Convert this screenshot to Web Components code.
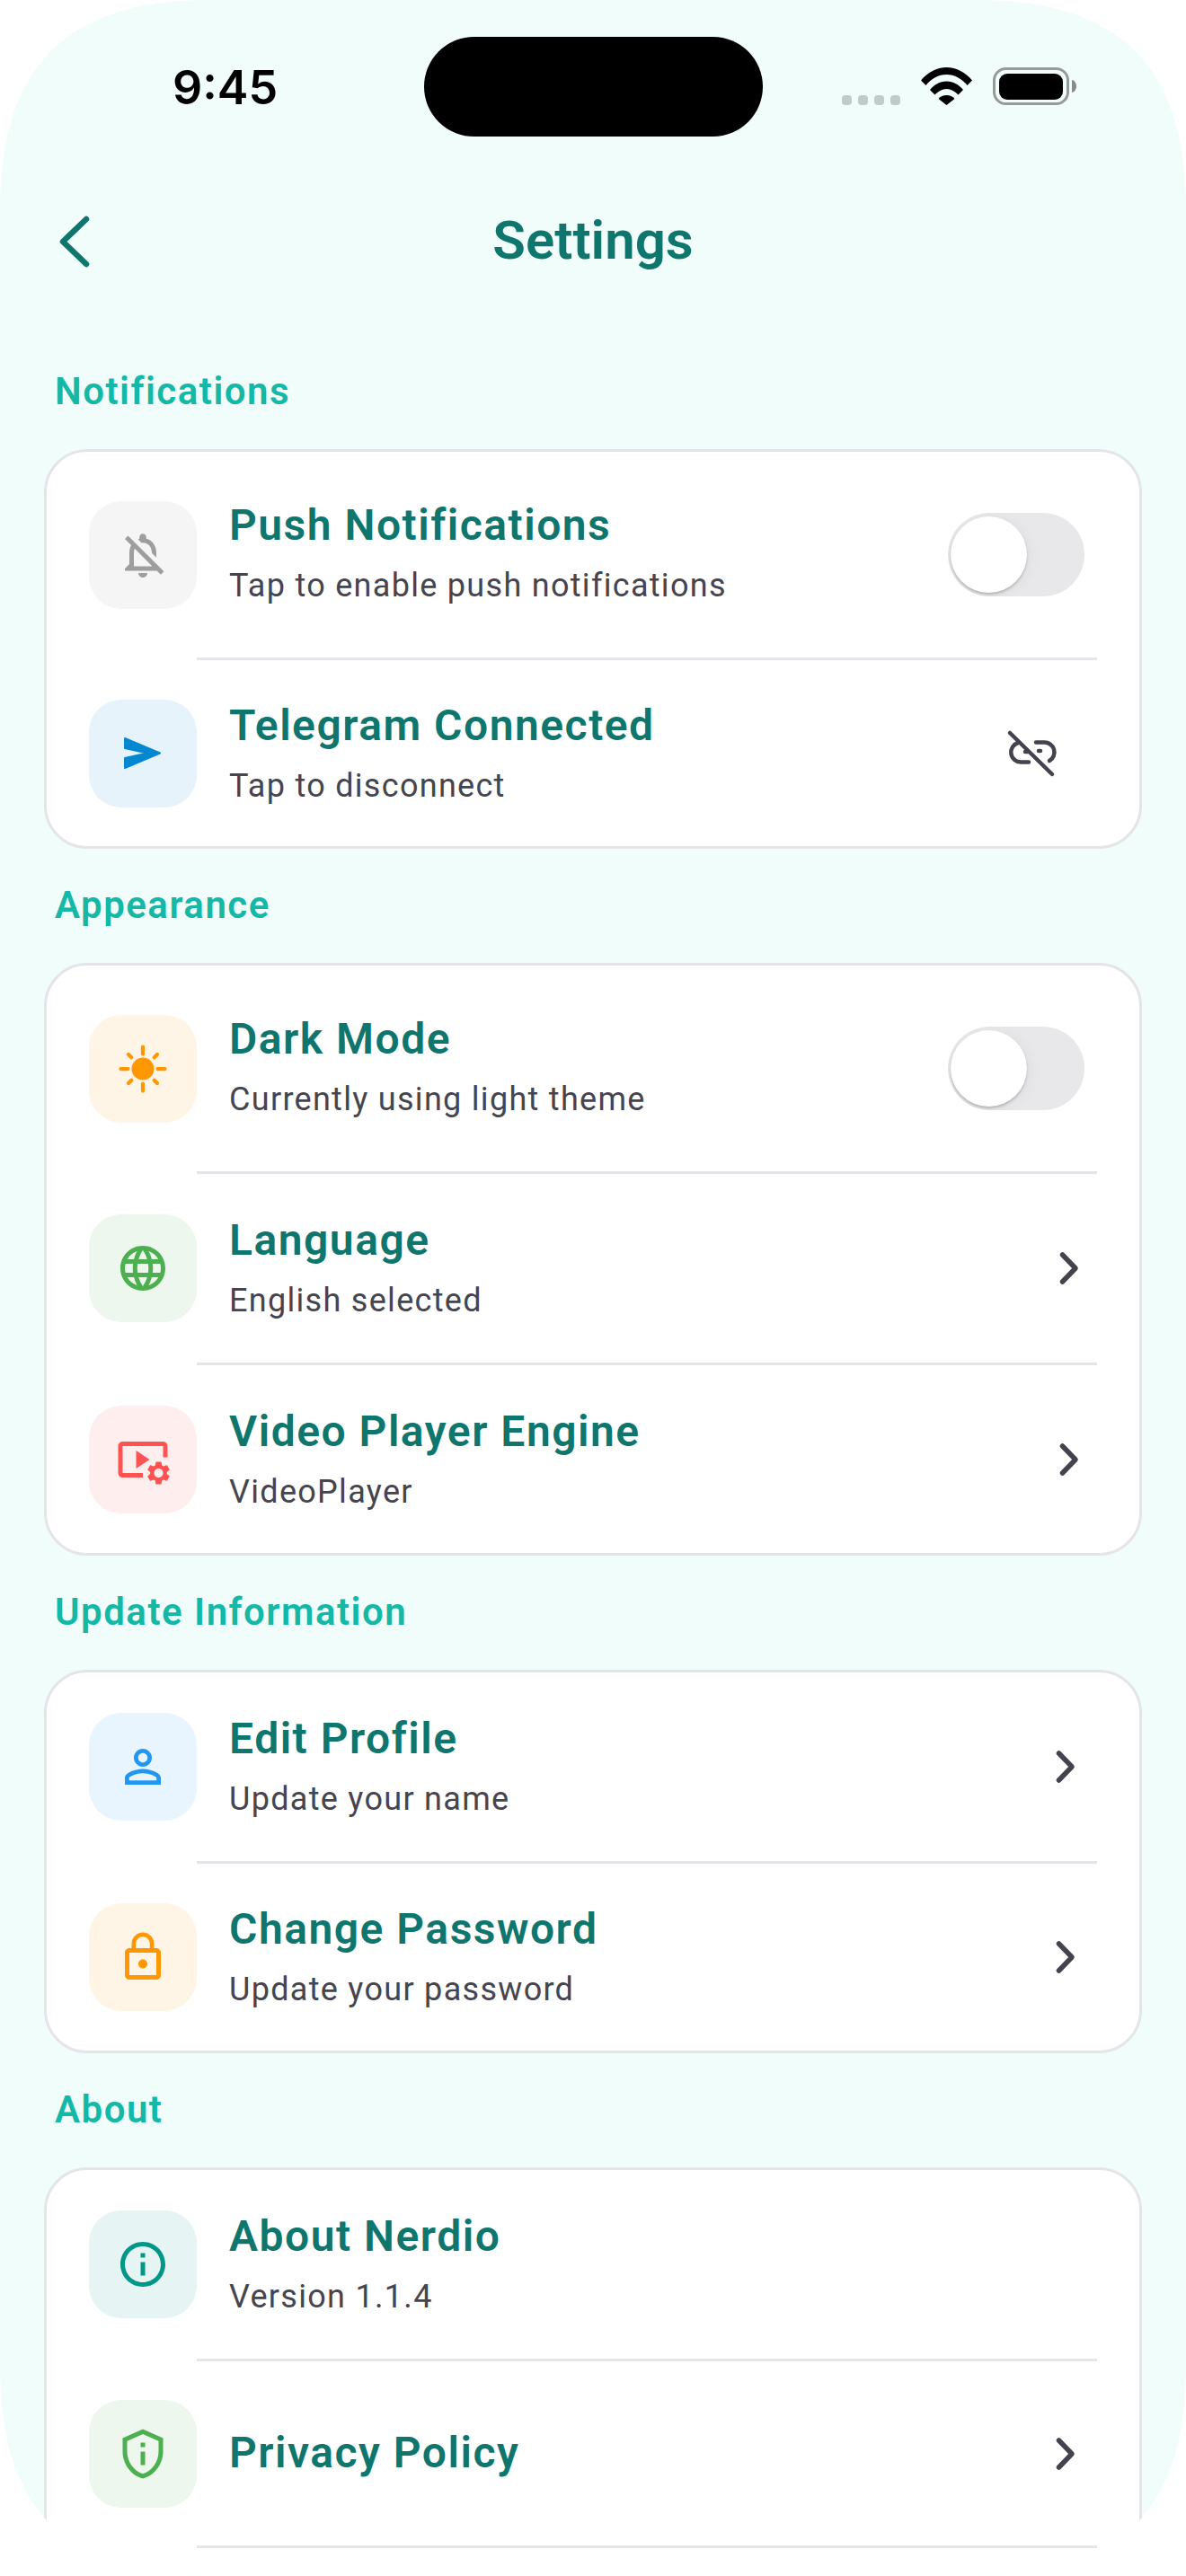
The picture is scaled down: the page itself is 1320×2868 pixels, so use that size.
<!DOCTYPE html>
<html>
<head>
<meta charset="utf-8">
<title>Settings</title>
<style>
	html, body { margin: 0; padding: 0; background: #fff; }
	body { font-family: Roboto, "Liberation Sans", sans-serif; }
</style>
</head>
<body>
<phone-screen>
	<status-bar></status-bar>
	<settings-header>Settings</settings-header>

	<settings-section heading="Notifications">
		<settings-row title="Push Notifications" sub="Tap to enable push notifications" icon="bell" tint="#9e9e9e" bg="#f5f5f5" size="229">
			<toggle-switch slot="end"></toggle-switch>
		</settings-row>
		<settings-row title="Telegram Connected" sub="Tap to disconnect" icon="send" tint="#0288d1" bg="#e6f3fa" size="207">
			<row-glyph slot="end" name="unlink"></row-glyph>
		</settings-row>
	</settings-section>

	<settings-section heading="Appearance">
		<settings-row title="Dark Mode" sub="Currently using light theme" icon="sun" tint="#ff9800" bg="#fff5e6" size="229">
			<toggle-switch slot="end"></toggle-switch>
		</settings-row>
		<settings-row title="Language" sub="English selected" icon="globe" tint="#4caf50" bg="#edf7ee" size="210">
			<row-glyph slot="end" name="chevron" wide></row-glyph>
		</settings-row>
		<settings-row title="Video Player Engine" sub="VideoPlayer" icon="video" tint="#ff5252" bg="#ffeeee" size="209">
			<row-glyph slot="end" name="chevron" wide></row-glyph>
		</settings-row>
	</settings-section>

	<settings-section heading="Update Information">
		<settings-row title="Edit Profile" sub="Update your name" icon="person" tint="#2196f3" bg="#e9f5fe" size="210">
			<row-glyph slot="end" name="chevron"></row-glyph>
		</settings-row>
		<settings-row title="Change Password" sub="Update your password" icon="lock" tint="#ff9800" bg="#fff5e6" size="208">
			<row-glyph slot="end" name="chevron"></row-glyph>
		</settings-row>
	</settings-section>

	<settings-section heading="About">
		<settings-row title="About Nerdio" sub="Version 1.1.4" icon="info" tint="#009688" bg="#e6f4f3" size="210"></settings-row>
		<settings-row title="Privacy Policy" icon="shield" tint="#4caf50" bg="#edf7ee" size="205">
			<row-glyph slot="end" name="chevron"></row-glyph>
		</settings-row>
		<settings-row size="120"></settings-row>
	</settings-section>
</phone-screen>

<script>
const ICONS = {
	bell: `<path d="M12 22c1.1 0 2-.9 2-2h-4c0 1.1.9 2 2 2zm0-15.5c2.49 0 4 2.02 4 4.5v.1l2 2V11c0-3.07-1.63-5.64-4.5-6.32V4c0-.83-.67-1.5-1.5-1.5s-1.5.67-1.5 1.5v.68c-.24.06-.47.15-.69.23l1.64 1.64c.18-.02.36-.05.55-.05zM5.41 3.35L4 4.76l2.81 2.81C6.29 8.57 6 9.74 6 11v5l-2 2v1h14.24l1.74 1.74 1.41-1.41L5.41 3.35zM16 17H8v-6c0-.68.12-1.32.34-1.9L16 16.76V17z"/>`,
	send: `<path transform="scale(.4)" stroke="currentColor" stroke-width="2" stroke-linejoin="round" d="M10 13 L49 29.5 L10 46 V35 L35 29.5 L10 24 Z"/>`,
	sun: `<circle cx="12" cy="12" r="5"/><g stroke="currentColor" stroke-width="1.7" stroke-linecap="round"><path d="M12 2.2v3.2M12 18.6v3.2M2.2 12h3.2M18.6 12h3.2M5.6 5.6l1.3 1.3M17.1 17.1l1.3 1.3M5.6 18.4l1.3-1.3M17.1 6.9l1.3-1.3"/></g>`,
	globe: `<path d="M11.99 2C6.47 2 2 6.48 2 12s4.47 10 9.99 10C17.52 22 22 17.52 22 12S17.52 2 11.99 2zm6.93 6h-2.95c-.32-1.25-.78-2.45-1.38-3.56 1.84.63 3.37 1.91 4.33 3.56zM12 4.04c.83 1.2 1.48 2.53 1.91 3.96h-3.82c.43-1.43 1.08-2.76 1.91-3.96zM4.26 14C4.1 13.36 4 12.69 4 12s.1-1.36.26-2h3.38c-.08.66-.14 1.32-.14 2 0 .68.06 1.34.14 2H4.26zm.82 2h2.95c.32 1.25.78 2.45 1.38 3.56-1.84-.63-3.37-1.9-4.33-3.56zm2.95-8H5.08c.96-1.66 2.49-2.93 4.33-3.56C8.81 5.55 8.35 6.75 8.03 8zM12 19.96c-.83-1.2-1.48-2.53-1.91-3.96h3.82c-.43 1.43-1.08 2.76-1.91 3.96zM14.34 14H9.66c-.09-.66-.16-1.32-.16-2 0-.68.07-1.35.16-2h4.68c.09.65.16 1.32.16 2 0 .68-.07 1.34-.16 2zm.25 5.56c.6-1.11 1.06-2.31 1.38-3.56h2.95c-.96 1.65-2.49 2.93-4.33 3.56zM16.36 14c.08-.66.14-1.32.14-2 0-.68-.06-1.34-.14-2h3.38c.16.64.26 1.31.26 2s-.1 1.36-.26 2h-3.38z"/>`,
	video: `<path d="M3 6h18v5h2V6c0-1.1-.9-2-2-2H3c-1.1 0-2 .9-2 2v12c0 1.1.9 2 2 2h9v-2H3V6z"/><path d="M15 12l-6-4v8l6-4z"/><path d="M22.71 18.43c.03-.29.04-.58.01-.86l1.07-.85c.1-.08.12-.21.06-.32l-1.03-1.79c-.06-.11-.19-.15-.31-.11l-1.27.5c-.23-.17-.48-.31-.75-.42l-.2-1.36c-.02-.13-.12-.22-.25-.22h-2.07c-.13 0-.23.09-.25.22l-.2 1.36c-.27.12-.52.26-.75.42l-1.28-.5c-.12-.05-.25 0-.31.11l-1.03 1.79c-.06.11-.04.24.06.32l1.07.85c-.03.29-.04.58-.01.86l-1.07.85c-.1.08-.12.21-.06.32l1.03 1.79c.06.11.19.15.31.11l1.27-.5c.23.17.48.31.75.42l.2 1.36c.02.13.12.22.25.22h2.07c.13 0 .23-.09.25-.22l.2-1.36c.27-.12.52-.26.75-.42l1.27.5c.12.05.25 0 .31-.11l1.03-1.79c.06-.11.04-.24-.06-.32l-1.06-.85zM19 20c-1.1 0-2-.9-2-2s.9-2 2-2 2 .9 2 2-.9 2-2 2z"/>`,
	person: `<path d="M12 5.9c1.16 0 2.1.94 2.1 2.1s-.94 2.1-2.1 2.1S9.9 9.16 9.9 8s.94-2.1 2.1-2.1m0 9c2.97 0 6.1 1.46 6.1 2.1v1.1H5.9V17c0-.64 3.13-2.1 6.1-2.1M12 4C9.79 4 8 5.79 8 8s1.79 4 4 4 4-1.79 4-4-1.79-4-4-4zm0 9c-2.67 0-8 1.34-8 4v3h16v-3c0-2.66-5.33-4-8-4z"/>`,
	lock: `<path d="M12 17c1.1 0 2-.9 2-2s-.9-2-2-2-2 .9-2 2 .9 2 2 2zm6-9h-1V6c0-2.76-2.24-5-5-5S7 3.24 7 6v2H6c-1.1 0-2 .9-2 2v10c0 1.1.9 2 2 2h12c1.1 0 2-.9 2-2V10c0-1.1-.9-2-2-2zM8.9 6c0-1.71 1.39-3.1 3.1-3.1s3.1 1.39 3.1 3.1v2H8.9V6zM18 20H6V10h12v10z"/>`,
	info: `<path d="M11 7h2v2h-2zm0 4h2v6h-2zm1-9C6.48 2 2 6.48 2 12s4.48 10 10 10 10-4.48 10-10S17.52 2 12 2zm0 18c-4.41 0-8-3.59-8-8s3.59-8 8-8 8 3.59 8 8-3.59 8-8 8z"/>`,
	shield: `<path d="M12 3.19l7 3.11V11c0 4.52-2.98 8.69-7 9.93-4.02-1.24-7-5.41-7-9.93V6.3l7-3.11M12 1L3 5v6c0 5.55 3.84 10.74 9 12 5.16-1.26 9-6.45 9-12V5l-9-4zm-1 6h2v2h-2zm0 4h2v6h-2z"/>`
};

class PhoneScreen extends HTMLElement {
	constructor() {
		super();
		this.attachShadow({mode: 'open'}).innerHTML = `
		<style>
		:host {
			display: block;
			width: 1320px;
			height: 2868px;
			overflow: hidden;
			background: #f0fdfb;
			/* squircle outline of the device */
			clip-path: path("M235 0H1085C1247 0 1320 73 1320 235V2633C1320 2795 1247 2868 1085 2868H235C73 2868 0 2795 0 2633V235C0 73 73 0 235 0Z");
		}
		</style>
		<slot></slot>`;
	}
}

class StatusBar extends HTMLElement {
	constructor() {
		super();
		this.attachShadow({mode: 'open'}).innerHTML = `
		<style>
		:host {
			display: flex;
			align-items: flex-start;
			height: 200px;
			box-sizing: border-box;
			padding: 41px 122px 0 192px;
		}
		.time {
			width: 280px;
			margin-top: 31px;
			font: 600 52px/52px Inter, "Liberation Sans", sans-serif;
			color: #000;
		}
		.island {
			width: 377px;
			height: 111px;
			border-radius: 56px;
			background: #000;
		}
		.right {
			display: flex;
			align-items: flex-end;
			height: 76px;
			margin-left: 88px;
		}
		.dots {
			display: flex;
			gap: 7px;
			margin-right: 23px;
		}
		.dots i {
			width: 11px;
			height: 11px;
			border-radius: 4px;
			background: #c3caca;
		}
		.wifi { display: block; margin-right: 23px; }
		.battery { display: block; }
		</style>
		<div class="time">9:45</div>
		<div class="island"></div>
		<div class="right">
			<div class="dots"><i></i><i></i><i></i><i></i></div>
			<svg class="wifi" width="57" height="42" viewBox="0 0 57 42">
				<path d="M0 14.5C7.5 5.5 17.5 0 28.5 0S49.500 5.500 57 14.500L51.500 20C45.500 12.500 37.500 8 28.500 8S11.500 12.500 5.500 20Z"/>
				<path d="M10 25C14.500 19.500 21 15.500 28.500 15.500S42.500 19.500 47 25L41.500 30.500C38 27 33.500 24 28.500 24S19 27 15.500 30.500Z"/>
				<path d="M19.500 35C21.500 32.500 25 31 28.500 31S35.500 32.500 37.500 35L28.500 42Z"/>
			</svg>
			<svg class="battery" width="93" height="42" viewBox="0 0 93 42">
				<rect x="1.500" y="1.500" width="82" height="39" rx="13" fill="none" stroke="#999" stroke-width="3"/>
				<rect x="7" y="7" width="71" height="29" rx="9"/>
				<path d="M88 14c3 .5 5 3.500 5 7s-2 6.500-5 7z" fill="#8a8a8a"/>
			</svg>
		</div>`;
	}
}

class SettingsHeader extends HTMLElement {
	constructor() {
		super();
		this.attachShadow({mode: 'open'}).innerHTML = `
		<style>
		:host {
			display: flex;
			align-items: center;
			justify-content: center;
			position: relative;
			height: 173px;
			box-sizing: border-box;
			padding-bottom: 38px;
			font: 600 60px/70px Roboto, sans-serif;
			color: #0f766e;
		}
		svg {
			position: absolute;
			left: 60px;
			top: 36px;
		}
		</style>
		<svg width="46" height="64" viewBox="0 0 46 64" fill="none" stroke="#0f766e" stroke-width="6.500" stroke-linecap="round" stroke-linejoin="round"><path d="M36 8 L10 33 L36 58"/></svg>
		<slot></slot>`;
	}
}

class SettingsSection extends HTMLElement {
	constructor() {
		super();
		this.attachShadow({mode: 'open'}).innerHTML = `
		<style>
		:host { display: block; }
		h2 {
			margin: 0;
			height: 127px;
			box-sizing: border-box;
			padding: 42px 0 0 61px;
			font: 600 42px/42px Roboto, sans-serif;
			letter-spacing: 1.500px;
			color: #14b8a6;
		}
		.card {
			margin: 0 49px;
			box-sizing: border-box;
			background: #fff;
			border: 3px solid #e5e5e9;
			border-radius: 48px;
		}
		::slotted(settings-row:not(:first-child)) {
			border-top: 3px solid transparent;
		}
		</style>
		<h2></h2>
		<div class="card"><slot></slot></div>`;
	}
	connectedCallback() {
		this.shadowRoot.querySelector('h2').textContent = this.getAttribute('heading');
	}
}

class SettingsRow extends HTMLElement {
	constructor() {
		super();
		this.attachShadow({mode: 'open'}).innerHTML = `
		<style>
		:host {
			display: block;
			position: relative;
		}
		:host(:not(:first-child))::before {
			content: "";
			position: absolute;
			left: 167px;
			right: 47px;
			top: -3px;
			height: 3px;
			background: #e5e5e9;
		}
		.row {
			display: flex;
			align-items: center;
			gap: 36px;
			padding: 0 47px;
			box-sizing: border-box;
		}
		.box {
			flex: none;
			display: flex;
			align-items: center;
			justify-content: center;
			width: 120px;
			height: 120px;
			border-radius: 36px;
		}
		.box svg { display: block; fill: currentColor; }
		.text { flex: 1; min-width: 0; padding-bottom: 2px; }
		:host([size="229"]) .text { padding-bottom: 6px; }
		.title {
			font: 600 48px/56px Roboto, sans-serif;
			letter-spacing: 1.500px;
			color: #0f766e;
		}
		.sub {
			margin-top: 18px;
			font: 400 36px/42px Roboto, sans-serif;
			letter-spacing: 1.300px;
			color: #45444f;
		}
		</style>
		<div class="row">
			<div class="box"><svg width="60" height="60" viewBox="0 0 24 24"></svg></div>
			<div class="text">
				<div class="title"></div>
				<div class="sub"></div>
			</div>
			<slot name="end"></slot>
		</div>`;
	}
	connectedCallback() {
		const root = this.shadowRoot;
		root.querySelector('.row').style.height = this.getAttribute('size') + 'px';
		const box = root.querySelector('.box');
		const icon = this.getAttribute('icon');
		if (icon) {
			box.style.background = this.getAttribute('bg');
			box.style.color = this.getAttribute('tint');
			box.querySelector('svg').innerHTML = ICONS[icon];
		} else {
			box.style.visibility = 'hidden';
		}
		root.querySelector('.title').textContent = this.getAttribute('title');
		const sub = root.querySelector('.sub');
		if (this.getAttribute('sub')) {
			sub.textContent = this.getAttribute('sub');
		} else {
			sub.remove();
		}
	}
}

class ToggleSwitch extends HTMLElement {
	constructor() {
		super();
		this.attachShadow({mode: 'open'}).innerHTML = `
		<style>
		:host {
			display: block;
			flex: none;
			width: 152px;
			height: 93px;
			margin-right: 14px;
			border-radius: 47px;
			overflow: hidden;
			background: #e8e8eb;
		}
		.knob {
			width: 85px;
			height: 85px;
			margin: 4px 0 0 3px;
			border-radius: 50%;
			background: #fff;
			box-shadow: 0 2px 3px rgba(0,0,0,.2), 2px 2px 16px rgba(0,0,0,.05);
		}
		</style>
		<div class="knob"></div>`;
	}
}

class RowGlyph extends HTMLElement {
	constructor() {
		super();
		const unlink = this.getAttribute('name') == 'unlink';
		const right = unlink ? 42 : this.hasAttribute('wide') ? 1 : 5;
		this.attachShadow({mode: 'open'}).innerHTML = `
		<style>
		:host {
			display: block;
			flex: none;
			width: 60px;
			height: 60px;
			margin-right: ${right}px;
		}
		svg { display: block; fill: none; stroke: #43424d; stroke-linecap: round; stroke-linejoin: round; }
		</style>
		<svg width="60" height="60" viewBox="0 0 60 60" stroke-width="${unlink ? 4.500 : 5.500}">
		${unlink
			? '<path d="M5 7 L52 53"/><path d="M14 18 A11 11 0 0 0 17 39.500 H26"/><path d="M34 17.500 H43 A11 11 0 0 1 49 38"/><path d="M22 28h3M37 27h2"/>'
			: '<path d="M22.500 15 L37 30 L22.500 45"/>'}
		</svg>`;
	}
}

customElements.define('phone-screen', PhoneScreen);
customElements.define('status-bar', StatusBar);
customElements.define('settings-header', SettingsHeader);
customElements.define('settings-section', SettingsSection);
customElements.define('settings-row', SettingsRow);
customElements.define('toggle-switch', ToggleSwitch);
customElements.define('row-glyph', RowGlyph);
</script>
</body>
</html>
